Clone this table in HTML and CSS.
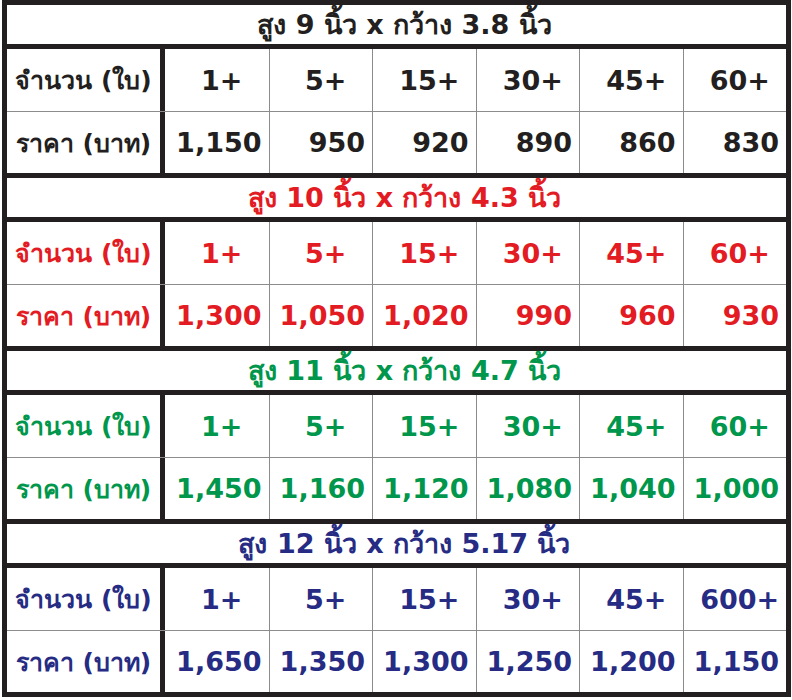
FILE: index.html
```html
<!DOCTYPE html>
<html lang="th">
<head>
    <meta charset="UTF-8">
    <meta name="viewport" content="width=device-width, initial-scale=1.0">
    <title>ราคาป้าย</title>
    <link rel="stylesheet" href="styles.css">
</head>
<body>
    <div class="sheet">
        <div class="section black">
            <div class="title">สูง 9 นิ้ว x กว้าง 3.8 นิ้ว</div>
            <div class="row qty">
                <div class="label">จำนวน (ใบ)</div>
                <div class="cell">1+</div>
                <div class="cell">5+</div>
                <div class="cell">15+</div>
                <div class="cell">30+</div>
                <div class="cell">45+</div>
                <div class="cell">60+</div>
            </div>
            <div class="row price">
                <div class="label">ราคา (บาท)</div>
                <div class="cell">1,150</div>
                <div class="cell">950</div>
                <div class="cell">920</div>
                <div class="cell">890</div>
                <div class="cell">860</div>
                <div class="cell">830</div>
            </div>
        </div>
        <div class="section red">
            <div class="title">สูง 10 นิ้ว x กว้าง 4.3 นิ้ว</div>
            <div class="row qty">
                <div class="label">จำนวน (ใบ)</div>
                <div class="cell">1+</div>
                <div class="cell">5+</div>
                <div class="cell">15+</div>
                <div class="cell">30+</div>
                <div class="cell">45+</div>
                <div class="cell">60+</div>
            </div>
            <div class="row price">
                <div class="label">ราคา (บาท)</div>
                <div class="cell">1,300</div>
                <div class="cell">1,050</div>
                <div class="cell">1,020</div>
                <div class="cell">990</div>
                <div class="cell">960</div>
                <div class="cell">930</div>
            </div>
        </div>
        <div class="section green">
            <div class="title">สูง 11 นิ้ว x กว้าง 4.7 นิ้ว</div>
            <div class="row qty">
                <div class="label">จำนวน (ใบ)</div>
                <div class="cell">1+</div>
                <div class="cell">5+</div>
                <div class="cell">15+</div>
                <div class="cell">30+</div>
                <div class="cell">45+</div>
                <div class="cell">60+</div>
            </div>
            <div class="row price">
                <div class="label">ราคา (บาท)</div>
                <div class="cell">1,450</div>
                <div class="cell">1,160</div>
                <div class="cell">1,120</div>
                <div class="cell">1,080</div>
                <div class="cell">1,040</div>
                <div class="cell">1,000</div>
            </div>
        </div>
        <div class="section navy">
            <div class="title">สูง 12 นิ้ว x กว้าง 5.17 นิ้ว</div>
            <div class="row qty">
                <div class="label">จำนวน (ใบ)</div>
                <div class="cell">1+</div>
                <div class="cell">5+</div>
                <div class="cell">15+</div>
                <div class="cell">30+</div>
                <div class="cell">45+</div>
                <div class="cell">600+</div>
            </div>
            <div class="row price">
                <div class="label">ราคา (บาท)</div>
                <div class="cell">1,650</div>
                <div class="cell">1,350</div>
                <div class="cell">1,300</div>
                <div class="cell">1,250</div>
                <div class="cell">1,200</div>
                <div class="cell">1,150</div>
            </div>
        </div>
    </div>
</body>
</html>
```

FILE: styles.css
```css
body {
    margin: 0;
    background-color: #fff;
    font-family: 'DejaVu Sans', 'Noto Sans', sans-serif;
    font-weight: bold;
}
.sheet {
    width: 789px;
    margin-left: 2px;
    border: 5px solid #231f20;
    box-sizing: border-box;
}
.section + .section {
    border-top: 5px solid #231f20;
}
.title {
    height: 39px;
    border-bottom: 5px solid #231f20;
    display: flex;
    align-items: center;
    justify-content: center;
    padding-left: 16px;
    font-size: 27px;
    white-space: nowrap;
}
.row {
    display: grid;
    grid-template-columns: 158px repeat(6, 1fr);
    height: 62px;
}
.row + .row {
    height: 61px;
    border-top: 1px solid #8c8c8c;
}
.label {
    border-right: 5px solid #231f20;
    display: flex;
    align-items: center;
    justify-content: center;
    font-size: 25px;
    white-space: nowrap;
}
.cell {
    display: flex;
    align-items: center;
    font-size: 27px;
    white-space: nowrap;
}
.cell + .cell {
    border-left: 1px solid #8c8c8c;
}
.qty .cell {
    justify-content: center;
    padding-left: 10px;
}
.price .cell {
    justify-content: flex-end;
    padding-right: 7px;
}
.black { color: #231f20; }
.red { color: #e31b23; }
.green { color: #00964b; }
.navy { color: #262b83; }
```
